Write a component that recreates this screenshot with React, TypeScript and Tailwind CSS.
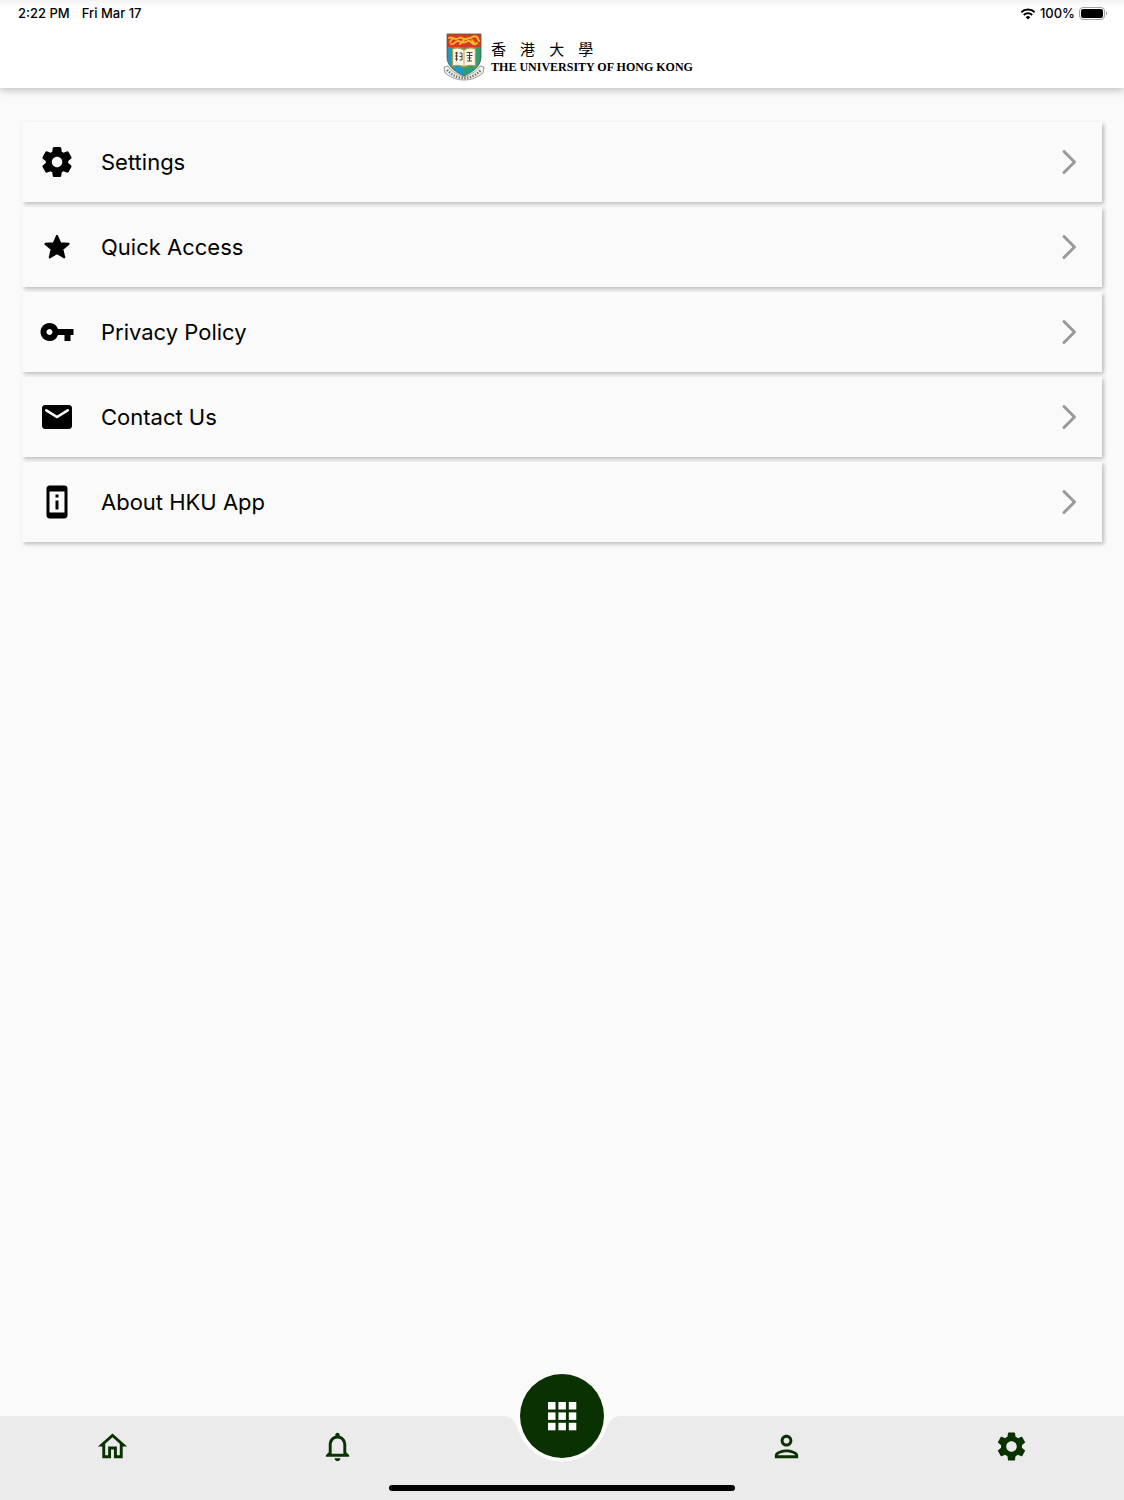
import { ReactNode } from "react";
import { MdOutlineHome, MdSettings } from "react-icons/md";

type TIcon = {
    size?: number;
    children: ReactNode;
}

type TMenuItem = {
    label: string;
    icon: ReactNode;
}

function Icon({ size = 36, children }: TIcon) {
    return (
        <svg width={size} height={size} viewBox="0 0 24 24" fill="currentColor" aria-hidden="true">
            {children}
        </svg>
    )
}

const menuItems: TMenuItem[] = [
    {
        label: "Settings",
        icon: (
            <Icon>
                <path d="M19.5 12c0-.23-.01-.45-.03-.68l1.86-1.41c.4-.3.51-.86.26-1.3l-1.87-3.23a.987.987 0 0 0-1.25-.42l-2.15.91c-.37-.26-.76-.49-1.17-.68l-.29-2.31c-.06-.5-.49-.88-.99-.88h-3.73c-.51 0-.94.38-1 .88l-.29 2.31c-.41.19-.8.42-1.17.68l-2.15-.91c-.46-.2-1-.02-1.25.42L2.41 8.62c-.25.44-.14.99.26 1.3l1.86 1.41a7.343 7.343 0 0 0 0 1.35l-1.86 1.41c-.4.3-.51.86-.26 1.3l1.87 3.23c.25.44.79.62 1.25.42l2.15-.91c.37.26.76.49 1.17.68l.29 2.31c.06.5.49.88.99.88h3.73c.5 0 .93-.38.99-.88l.29-2.31c.41-.19.8-.42 1.17-.68l2.15.91c.46.2 1 .02 1.25-.42l1.87-3.23c.25-.44.14-.99-.26-1.3l-1.86-1.41c.03-.23.04-.45.04-.68zm-7.46 3.5c-1.93 0-3.5-1.57-3.5-3.5s1.57-3.5 3.5-3.5 3.5 1.57 3.5 3.5-1.57 3.5-3.5 3.5z" />
            </Icon>
        ),
    },
    {
        label: "Quick Access",
        icon: (
            <Icon>
                <path
                    d="M12 4.6l2.1 4.9 5.6.4-4.2 3.5 1.3 5.5L12 16l-4.8 2.9 1.3-5.5L4.3 9.9l5.6-.4z"
                    stroke="currentColor"
                    strokeWidth="1.4"
                    strokeLinejoin="round"
                />
            </Icon>
        ),
    },
    {
        label: "Privacy Policy",
        icon: (
            <Icon>
                <path d="M12.65 10A5.99 5.99 0 0 0 7 6c-3.31 0-6 2.69-6 6s2.69 6 6 6a5.99 5.99 0 0 0 5.65-4H17v4h4v-4h2v-4H12.65zM7 14c-1.1 0-2-.9-2-2s.9-2 2-2 2 .9 2 2-.9 2-2 2z" />
            </Icon>
        ),
    },
    {
        label: "Contact Us",
        icon: (
            <Icon>
                <path d="M20 4H4c-1.1 0-2 .9-2 2v12c0 1.1.9 2 2 2h16c1.1 0 2-.9 2-2V6c0-1.1-.9-2-2-2zm-.4 4.25l-7.07 4.42c-.32.2-.74.2-1.06 0L4.4 8.25a.85.85 0 1 1 .9-1.44L12 11l6.7-4.19a.85.85 0 1 1 .9 1.44z" />
            </Icon>
        ),
    },
    {
        label: "About HKU App",
        icon: (
            <Icon>
                <path d="M13 7h-2v2h2V7zm0 4h-2v6h2v-6zm4-9.99L7 1c-1.1 0-2 .9-2 2v18c0 1.1.9 2 2 2h10c1.1 0 2-.9 2-2V3c0-1.1-.9-1.99-2-1.99zM17 19H7V5h10v14z" />
            </Icon>
        ),
    },
]

function StatusBar() {
    return (
        <div className="flex h-7 items-center justify-between bg-linear-to-b from-[#f3f3f3] to-white to-30% pr-4 pl-[18px] text-[13px] font-medium">
            <div className="flex gap-3">
                <span>2:22 PM</span>
                <span>Fri Mar 17</span>
            </div>
            <div className="flex items-center gap-1">
                <svg width="16" height="12" viewBox="0 0 16 12" fill="none" stroke="black" strokeWidth="2" aria-hidden="true">
                    <path d="M1.3 4.3a9.5 9.5 0 0 1 13.4 0M3.8 7a6 6 0 0 1 8.4 0" />
                    <path d="M8 11.5L5.7 9.2a3.3 3.3 0 0 1 4.6 0z" fill="black" stroke="none" />
                </svg>
                <span>100%</span>
                <svg width="29" height="14" viewBox="0 0 29 14" aria-hidden="true">
                    <rect x="0.5" y="0.5" width="25" height="12" rx="3.5" fill="none" stroke="#a3a3a3" />
                    <rect x="2" y="2" width="22" height="9" rx="2" fill="black" />
                    <path d="M27 4.5v4c1.6-.6 1.6-3.4 0-4z" fill="#a3a3a3" />
                </svg>
            </div>
        </div>
    )
}

function Crest() {
    return (
        <svg width="42" height="48" viewBox="0 0 42 48" aria-hidden="true">
            <path d="M4 14h17v29C10 38 4 32 4 24z" fill="#1c9ac0" />
            <path d="M21 14h17v10c0 8-6 14-17 19z" fill="#2a9d72" />
            <path d="M4 1h34v13H4z" fill="#d8391f" />
            <path
                d="M6 5c3-2 4 1 7 1s4-3 6-1 5 1 8 0 4-3 7-1M8 11c3 1 4-3 7-3s5 3 8 1 4-1 6 1 4 1 5 0M10 5l-3 4M21 7l-4 4M29 7l3 4M34 4l2 4"
                fill="none"
                stroke="#f3b92c"
                strokeWidth="1.9"
                strokeLinecap="round"
            />
            <path d="M4 1h34v23c0 8-6 14-17 19C10 38 4 32 4 24z" fill="none" stroke="#4c5a48" strokeWidth="0.8" />
            <path d="M9.5 16c4-2 8.5-1 11.5 1 3-2 7.5-3 11.5-1v17c-4-1-8.500-1-11.500 1-3-2-7.500-2-11.500-1z" fill="#fbf8ec" stroke="#c2963a" strokeWidth="1.3" />
            <path d="M21 17v17" stroke="#b98a2c" strokeWidth="0.8" />
            <path d="M12 20h3M12 23h3M12 26h3M13.5 19v9M16.5 20h2.5v7h-2.5M16.5 23.5H19M23.5 19.5h6M23.5 22.5h6M24.5 25h4M26.5 19v9M24 28h5" stroke="#333" strokeWidth="0.9" fill="none" />
            <path d="M1 34l4-1c3 5 8 8 16 11 8-3 13-6 16-11l4 1-1 6c-5 4-11 7-19 7S7 44 2 40z" fill="#f1f1eb" stroke="#777" strokeWidth="0.7" />
            <path d="M4 37c5 5 10 8 17 8s12-3 17-8" fill="none" stroke="#666" strokeWidth="2.4" strokeDasharray="1.3 1.5" />
        </svg>
    )
}

function Header() {
    return (
        <header className="relative bg-white shadow-[0_2px_8px_rgba(0,0,0,0.25)]">
            <StatusBar />
            <div className="flex h-15 justify-center gap-1.5 pt-[5px] pl-3">
                <Crest />
                <div className="pt-1.5">
                    <div className="flex gap-3.5 font-['Noto_Sans_CJK_TC',sans-serif] text-[15px] leading-5" lang="zh-Hant">
                        <span>香</span>
                        <span>港</span>
                        <span>大</span>
                        <span>學</span>
                    </div>
                    <div className="font-['Liberation_Serif',serif] text-[12px] leading-4 font-bold">
                        THE UNIVERSITY OF HONG KONG
                    </div>
                </div>
            </div>
        </header>
    )
}

function MenuRow({ label, icon }: TMenuItem) {
    return (
        <li>
            <a
                href="#"
                className="flex h-20 items-center bg-[#fafafa] pr-6 pl-[17px] text-[22px] shadow-[2px_2px_4px_rgba(0,0,0,0.25)]"
            >
                {icon}
                <span className="flex-1 pl-[26px]">{label}</span>
                <svg width="20" height="28" viewBox="0 0 20 28" fill="none" stroke="#999" strokeWidth="3" strokeLinecap="round" strokeLinejoin="round" aria-hidden="true">
                    <path d="M6 3.5L16.5 14 6 24.5" />
                </svg>
            </a>
        </li>
    )
}

function BottomNav() {
    return (
        <nav className="relative h-21 bg-[#ebebeb] text-[#0a3200]">
            <svg className="absolute top-0 left-1/2 -translate-x-1/2" width="120" height="48" viewBox="-60 0 120 48" aria-hidden="true">
                <path d="M-60 0C-48 0-46 8-43 16A46 46 0 0 0 43 16C46 8 48 0 60 0z" fill="#fcfcfc" />
            </svg>
            <div className="grid grid-cols-5 justify-items-center pt-[13px]">
                <a href="#" aria-label="Home">
                    <MdOutlineHome size={35} />
                </a>
                <a href="#" aria-label="Notifications">
                    <Icon size={35}>
                        <path d="M12 22c1.1 0 2-.9 2-2h-4c0 1.1.9 2 2 2zm6-6v-5c0-3.07-1.63-5.64-4.5-6.32V4c0-.83-.67-1.5-1.5-1.5s-1.5.67-1.5 1.5v.68C7.64 5.36 6 7.92 6 11v5l-2 2v1h16v-1l-2-2zm-2 1H8v-6c0-2.48 1.51-4.5 4-4.5s4 2.02 4 4.5v6z" />
                    </Icon>
                </a>
                <button
                    type="button"
                    aria-label="Apps"
                    className="relative -mt-[55px] flex size-21 items-center justify-center rounded-full bg-[#0a3200] text-white"
                >
                    <svg width="30" height="30" viewBox="0 0 30 30" fill="currentColor" aria-hidden="true">
                        {[1, 11.4, 21.8].map(y => [1, 11.4, 21.8].map(x => (
                            <rect key={`${x}-${y}`} x={x} y={y} width="7.5" height="7.5" />
                        )))}
                    </svg>
                </button>
                <a href="#" aria-label="Profile">
                    <Icon size={35}>
                        <path d="M12 6c1.1 0 2 .9 2 2s-.9 2-2 2-2-.9-2-2 .9-2 2-2m0 10c2.7 0 5.8 1.29 6 2H6c.23-.72 3.31-2 6-2m0-12C9.79 4 8 5.79 8 8s1.79 4 4 4 4-1.79 4-4-1.79-4-4-4zm0 10c-2.67 0-8 1.34-8 4v2h16v-2c0-2.66-5.33-4-8-4z" />
                    </Icon>
                </a>
                <a href="#" aria-label="More">
                    <MdSettings size={35} />
                </a>
            </div>
            <div className="absolute bottom-[9px] left-1/2 h-[6px] w-[346px] -translate-x-1/2 rounded-full bg-black" />
        </nav>
    )
}

export default function App() {
    return (
        <div className="flex min-h-screen flex-col bg-[#fafafa] font-['Inter',sans-serif] text-black">
            <Header />
            <main className="flex-1 px-[22px] pt-[34px]">
                <ul className="flex flex-col gap-[5px]">
                    {menuItems.map(item => (
                        <MenuRow key={item.label} label={item.label} icon={item.icon} />
                    ))}
                </ul>
            </main>
            <BottomNav />
        </div>
    )
}
